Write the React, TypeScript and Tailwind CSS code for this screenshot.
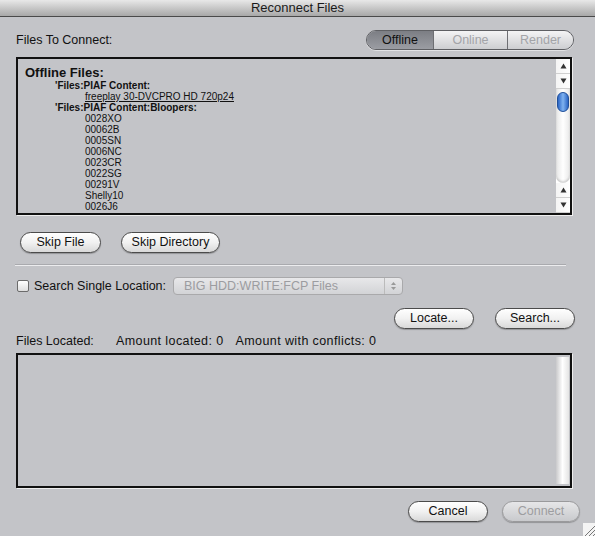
import React from "react";

const offlineItems = ["0028XO", "00062B", "0005SN", "0006NC", "0023CR", "0022SG", "00291V", "Shelly10", "0026J6"];

function PillButton({ label, width, disabled }: { label: string; width: number; disabled?: boolean }) {
  return (
    <button
      style={{ width }}
      className={`h-[21px] rounded-full border text-[12.5px] leading-none shadow-[0_1px_1px_rgba(0,0,0,0.25)] ${
        disabled
          ? "border-[#9a9a9c] bg-gradient-to-b from-[#e6e6e8] to-[#c9cacd] text-[#9d9da0]"
          : "border-[#4b4b4b] bg-gradient-to-b from-[#ffffff] via-[#f1f1f1] to-[#d9d9d9] text-[#111]"
      }`}
    >
      {label}
    </button>
  );
}

function Arrow({ up }: { up?: boolean }) {
  return (
    <div className="flex h-[15px] items-center justify-center border-b border-[#d0d0d0] bg-gradient-to-r from-[#f4f4f4] to-[#ffffff]">
      <svg width="7" height="6" viewBox="0 0 7 6">
        <path d={up ? "M3.5 0.5 L6.5 5.5 L0.5 5.5 Z" : "M0.5 0.5 L6.5 0.5 L3.5 5.5 Z"} fill="#333" />
      </svg>
    </div>
  );
}

function Segmented() {
  return (
    <div className="flex h-[20px] overflow-hidden rounded-full border border-[#5e5f63] text-[12.5px] shadow-[0_1px_0_rgba(255,255,255,0.5)]">
      <div className="flex w-[66px] items-center justify-center bg-gradient-to-b from-[#7c7e84] to-[#9b9da3] text-[#111]">Offline</div>
      <div className="flex w-[74px] items-center justify-center border-l border-[#6e6f73] bg-gradient-to-b from-[#f4f4f5] to-[#cdced1] text-[#a3a4a8]">Online</div>
      <div className="flex w-[66px] items-center justify-center border-l border-[#6e6f73] bg-gradient-to-b from-[#f4f4f5] to-[#cdced1] text-[#a3a4a8]">Render</div>
    </div>
  );
}

export default function App() {
  return (
    <div className="relative h-[536px] w-[595px] overflow-hidden bg-[#c3c4c8] text-[#111]" style={{ fontFamily: '"Liberation Sans", Arial, sans-serif' }}>
      {/* title bar */}
      <div className="flex h-[17px] items-center justify-center border-b border-[#4a4a4a] bg-gradient-to-b from-[#e8e8e8] to-[#a8a8a8] text-[13px] text-[#1a1a1a]">
        Reconnect Files
      </div>

      <div className="mt-[13px] flex items-center justify-between pl-[16px] pr-[21px]">
        <span className="text-[12.5px]">Files To Connect:</span>
        <Segmented />
      </div>

      {/* offline list */}
      <div className="ml-[16px] mt-[7px] flex h-[158px] w-[556px] border-2 border-[#111] shadow-[1px_1px_0_#eee]">
        <div className="flex-1 pl-[7px] pt-[6px]">
          <div className="text-[13px] font-bold leading-[15px]">Offline Files:</div>
          <div className="pl-[30px] text-[10px] leading-[11px]">
            <div className="font-bold">'Files:PIAF Content:</div>
            <div className="pl-[30px] underline">freeplay 30-DVCPRO HD 720p24</div>
            <div className="font-bold">'Files:PIAF Content:Bloopers:</div>
            {offlineItems.map((it) => (
              <div key={it} className="pl-[30px]">{it}</div>
            ))}
          </div>
        </div>
        <div className="flex w-[14px] flex-col bg-white">
          <Arrow up />
          <Arrow />
          <div className="relative flex-1 rounded-b-full bg-gradient-to-r from-[#e6e6e6] via-[#ffffff] to-[#e8e8e8] shadow-[inset_0_-2px_2px_rgba(0,0,0,0.15)]">
            <div className="absolute left-[1px] top-[3px] h-[20px] w-[12px] rounded-full border border-[#1f4f9a] bg-gradient-to-r from-[#2b65c4] via-[#7fb2f0] to-[#2b65c4]" />
          </div>
          <Arrow up />
          <Arrow />
        </div>
      </div>

      <div className="ml-[20px] mt-[17px] flex gap-[20px]">
        <PillButton label="Skip File" width={81} />
        <PillButton label="Skip Directory" width={99} />
      </div>

      <div className="ml-[15px] mt-[11px] h-[2px] w-[551px] border-t border-[#a9aaae] bg-[#ececee]" />

      <div className="mt-[11px] flex h-[18px] items-center pl-[17px] text-[12.5px]">
        <div className="h-[12px] w-[12px] rounded-[2px] border border-[#6b6b6b] bg-gradient-to-b from-white to-[#dedede]" />
        <span className="ml-[5px]">Search Single Location:</span>
        <div className="ml-[7px] flex h-[18px] w-[230px] items-center rounded-[4px] border border-[#a9a9ab] bg-gradient-to-b from-[#e8e8ea] to-[#d2d3d6] pl-[10px] text-[#9c9ca0]">
          <span className="flex-1">BIG HDD:WRITE:FCP Files</span>
          <div className="flex h-full w-[18px] flex-col items-center justify-center gap-[2px] border-l border-[#bbb]">
            <svg width="5" height="3" viewBox="0 0 5 3"><path d="M2.5 0 L5 3 L0 3 Z" fill="#999" /></svg>
            <svg width="5" height="3" viewBox="0 0 5 3"><path d="M0 0 L5 0 L2.5 3 Z" fill="#999" /></svg>
          </div>
        </div>
      </div>

      <div className="mt-[13px] flex justify-end gap-[21px] pr-[20px]">
        <PillButton label="Locate..." width={80} />
        <PillButton label="Search..." width={80} />
      </div>

      <div className="mt-[5px] flex h-[14px] items-center pl-[16px] text-[12.5px]">
        <span className="w-[100px]">Files Located:</span>
        <span className="tracking-[0.4px]">Amount located: 0</span>
        <span className="ml-[12px] tracking-[0.4px]">Amount with conflicts: 0</span>
      </div>

      {/* located list */}
      <div className="ml-[16px] mt-[5px] flex h-[135px] w-[556px] border-2 border-[#111] shadow-[1px_1px_0_#eee]">
        <div className="flex-1" />
        <div className="my-[2px] mr-[1px] w-[13px] bg-gradient-to-r from-[#c9c9cb] via-[#ffffff] to-[#e4e4e4]" />
      </div>

      <div className="mt-[13px] flex justify-end gap-[14px] pr-[15px]">
        <PillButton label="Cancel" width={80} />
        <PillButton label="Connect" width={78} disabled />
      </div>

      {/* resize grip */}
      <svg className="absolute bottom-0 right-0" width="12" height="13" viewBox="0 0 12 13">
        <rect width="12" height="13" fill="#f4f4f4" />
        <path d="M2 13 L12 3 M6 13 L12 7 M10 13 L12 11" stroke="#777" strokeWidth="1" />
      </svg>
    </div>
  );
}
